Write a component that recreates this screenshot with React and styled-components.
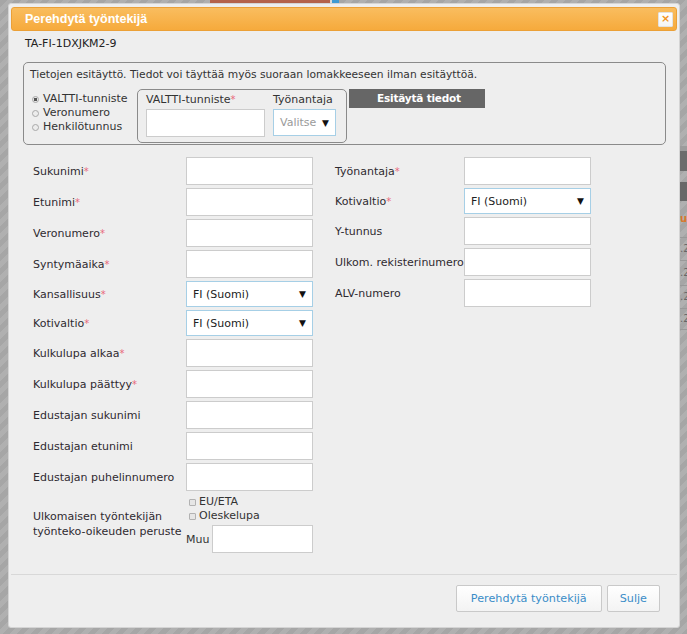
import React from "react";
import styled, { createGlobalStyle } from "styled-components";

const Global = createGlobalStyle`
  html, body { margin: 0; padding: 0; }
  body {
    width: 687px; height: 634px; overflow: hidden;
    font-family: "DejaVu Sans", Verdana, sans-serif;
  }
`;

const Page = styled.div`
  position: relative;
  width: 687px;
  height: 634px;
  overflow: hidden;
  display: flex;
  flex-direction: column;
  background: repeating-linear-gradient(135deg, #a6a6a6 0 5px, #b0b0b0 5px 10px);
`;

const BehindTop = styled.div`
  display: flex;
  height: 3px;
  padding-left: 210px;
`;

const Swatch = styled.div`
  width: ${(p) => p.$w}px;
  height: ${(p) => p.$h || 3}px;
  background: ${(p) => p.$c};
`;

const BehindSideWrap = styled.div`
  display: flex;
  justify-content: flex-end;
  padding-top: 143px;
`;

const BehindSide = styled.div`
  width: 8px;
  display: flex;
  flex-direction: column;
  font-size: 10px;
  line-height: 12px;
  color: #666;
`;

const SideBlock = styled.div`
  height: ${(p) => p.$h}px;
  background: ${(p) => p.$c || "transparent"};
  border-bottom: ${(p) => (p.$line ? "1px solid #999" : "none")};
  color: ${(p) => p.$fg || "#666"};
  font-weight: ${(p) => (p.$bold ? 700 : 400)};
  display: flex;
  align-items: center;
  white-space: nowrap;
  padding-left: 1px;
`;

const Dialog = styled.section`
  position: absolute;
  top: 3px;
  left: 8px;
  width: 672px;
  height: 625px;
  box-sizing: border-box;
  background: #eeeeee;
  border: 1px solid #d4d4d4;
  border-radius: 3px;
  padding: 3px 2px 0;
  display: flex;
  flex-direction: column;
  color: #333;
`;

const Header = styled.header`
  height: 24px;
  box-sizing: border-box;
  border: 1px solid #eba037;
  border-radius: 3px;
  background: linear-gradient(#f9bd5f, #f6aa3c);
  display: flex;
  align-items: center;
  justify-content: space-between;
  padding: 0 3px 0 13px;
`;

const Title = styled.h1`
  margin: 0;
  font-family: "Liberation Sans", Arial, sans-serif;
  font-size: 12.5px;
  font-weight: 700;
  color: #fff;
`;

const CloseButton = styled.button`
  width: 15px;
  height: 15px;
  padding: 0;
  box-sizing: border-box;
  border: 1px solid #e2e2e2;
  border-radius: 1px;
  background: linear-gradient(#ffffff, #f4f4f4);
  color: #f29420;
  font-family: "DejaVu Sans", sans-serif;
  font-weight: 700;
  font-size: 11px;
  line-height: 12px;
  display: flex;
  align-items: center;
  justify-content: center;
`;

const Body = styled.div`
  padding: 0 12px;
  display: flex;
  flex-direction: column;
`;

const IdLine = styled.div`
  padding: 5px 2px 0;
  font-size: 11px;
  line-height: 16px;
  color: #222;
`;

const Prefill = styled.div`
  margin-top: 10px;
  width: 643px;
  height: 83px;
  box-sizing: border-box;
  border: 1px solid #8a8a8a;
  border-radius: 5px;
  padding: 5px 6px 0 6px;
`;

const PrefillText = styled.div`
  font-size: 10.7px;
  line-height: 13px;
  color: #333;
`;

const PrefillRow = styled.div`
  margin-top: 8px;
  display: flex;
  align-items: flex-start;
`;

const RadioGroup = styled.div`
  width: 105px;
  margin-left: 2px;
  padding-top: 3px;
  display: flex;
  flex-direction: column;
`;

const RadioLine = styled.label`
  display: flex;
  align-items: center;
  gap: 4px;
  font-size: 11px;
  line-height: 14px;
  color: #333;
  white-space: nowrap;
`;

const RadioDot = styled.span`
  width: 7px;
  height: 7px;
  box-sizing: border-box;
  border-radius: 50%;
  border: 1px solid #a8a8a8;
  background: ${(p) => (p.$on ? "radial-gradient(circle, #555 0 1.6px, #e8e8e8 2px)" : "#ececec")};
  flex: none;
`;

const InnerBox = styled.div`
  width: 210px;
  height: 54px;
  box-sizing: border-box;
  border: 1px solid #8a8a8a;
  border-radius: 5px;
  padding: 3px 0 0 8px;
  display: flex;
  gap: 8px;
`;

const InnerField = styled.div`
  display: flex;
  flex-direction: column;
  gap: 2px;
`;

const InnerLabel = styled.span`
  font-size: 11px;
  line-height: 14px;
  color: #333;
  white-space: nowrap;
`;

const Req = styled.span`
  color: #e8697c;
  font-size: 10px;
`;

const TextInput = styled.input`
  width: ${(p) => p.$w || 127}px;
  height: 28px;
  box-sizing: border-box;
  border: 1px solid #cccccc;
  background: #fff;
  margin: 0;
  padding: 0 4px;
  font: inherit;
  outline: none;
`;

const SelectBox = styled.div`
  width: ${(p) => p.$w || 127}px;
  height: ${(p) => p.$h || 26}px;
  box-sizing: border-box;
  border: 1px solid #a6cfe6;
  background: #fff;
  display: flex;
  align-items: center;
  justify-content: space-between;
  padding: 0 6px 0 6px;
  font-size: 11px;
  color: ${(p) => (p.$placeholder ? "#9a9a9a" : "#222")};
`;

const Arrow = styled.span`
  font-size: 9px;
  color: #111;
`;

const PrefillButton = styled.button`
  margin-left: 2px;
  width: 136px;
  height: 19px;
  border: none;
  background: #666666;
  color: #fff;
  font-family: "DejaVu Sans", sans-serif;
  font-weight: 700;
  font-size: 10.5px;
  padding: 0 0 1px 4px;
  letter-spacing: -0.2px;
`;

const Columns = styled.div`
  margin-top: 12px;
  padding-left: 10px;
  display: flex;
  gap: 22px;
  align-items: flex-start;
`;

const Column = styled.div`
  display: flex;
  flex-direction: column;
  gap: 3px;
`;

const Row = styled.div`
  display: grid;
  grid-template-columns: ${(p) => p.$labelW}px 127px;
  align-items: center;
`;

const Label = styled.span`
  font-size: 11px;
  line-height: 15px;
  color: #2e2a30;
  white-space: nowrap;
`;

const BasisField = styled.div`
  display: flex;
  flex-direction: column;
  padding-top: 1px;
`;

const CheckLine = styled.label`
  display: flex;
  align-items: center;
  gap: 3px;
  padding-left: 3px;
  font-size: 11px;
  line-height: 14px;
  color: #333;
`;

const CheckBox = styled.span`
  width: 7px;
  height: 7px;
  box-sizing: border-box;
  border: 1px solid #b2b2b2;
  border-radius: 1px;
  background: #e6e6e6;
  flex: none;
`;

const MuuLine = styled.div`
  margin-top: 2px;
  display: flex;
  align-items: center;
  justify-content: space-between;
  font-size: 11px;
  color: #333;
`;

const Footer = styled.footer`
  margin-top: auto;
  border-top: 1px solid #d8d8d8;
  padding: 10px 17px 15px;
  display: flex;
  justify-content: flex-end;
  gap: 5px;
`;

const FooterButton = styled.button`
  height: 27px;
  box-sizing: border-box;
  padding: 0 ${(p) => p.$pad || 12}px;
  border: 1px solid #c9c9c9;
  border-radius: 2px;
  background: linear-gradient(#ffffff, #f3f3f3);
  color: #3a8dc8;
  font-family: "DejaVu Sans", sans-serif;
  font-size: 11.2px;
`;

const leftFields = [
  { label: "Sukunimi", req: true },
  { label: "Etunimi", req: true },
  { label: "Veronumero", req: true },
  { label: "Syntymäaika", req: true },
  { label: "Kansallisuus", req: true, select: "FI (Suomi)" },
  { label: "Kotivaltio", req: true, select: "FI (Suomi)" },
  { label: "Kulkulupa alkaa", req: true },
  { label: "Kulkulupa päättyy", req: true },
  { label: "Edustajan sukunimi" },
  { label: "Edustajan etunimi" },
  { label: "Edustajan puhelinnumero" },
];

const rightFields = [
  { label: "Työnantaja", req: true },
  { label: "Kotivaltio", req: true, select: "FI (Suomi)" },
  { label: "Y-tunnus" },
  { label: "Ulkom. rekisterinumero" },
  { label: "ALV-numero" },
];

function Field({ f, labelW }) {
  return (
    <Row $labelW={labelW}>
      <Label>
        {f.label}
        {f.req && <Req>*</Req>}
      </Label>
      {f.select ? (
        <SelectBox>
          <span>{f.select}</span>
          <Arrow>▼</Arrow>
        </SelectBox>
      ) : (
        <TextInput />
      )}
    </Row>
  );
}

export default function App() {
  return (
    <>
      <Global />
      <Page>
        <BehindTop>
          <Swatch $w={120} $c="#b4624b" />
          <Swatch $w={2} $c="#d9d9d9" />
          <Swatch $w={7} $c="#3e9ad2" />
        </BehindTop>
        <BehindSideWrap>
          <BehindSide>
            <SideBlock $h={5} $c="#9c9c9c" />
            <SideBlock $h={20} $c="#6c6c6c" />
            <SideBlock $h={11} />
            <SideBlock $h={19} $c="#686868" />
            <SideBlock $h={12} />
            <SideBlock $h={12} $fg="#d8772c" $bold>ul</SideBlock>
            <SideBlock $h={12} $line />
            <SideBlock $h={22} $line>.2</SideBlock>
            <SideBlock $h={24} $line>.2</SideBlock>
            <SideBlock $h={22} $line>.2</SideBlock>
            <SideBlock $h={20} $line>.2</SideBlock>
          </BehindSide>
        </BehindSideWrap>

        <Dialog>
          <Header>
            <Title>Perehdytä työntekijä</Title>
            <CloseButton aria-label="Sulje">×</CloseButton>
          </Header>
          <Body>
            <IdLine>TA-FI-1DXJKM2-9</IdLine>
            <Prefill>
              <PrefillText>
                Tietojen esitäyttö. Tiedot voi täyttää myös suoraan lomakkeeseen ilman esitäyttöä.
              </PrefillText>
              <PrefillRow>
                <RadioGroup>
                  <RadioLine>
                    <RadioDot $on />
                    VALTTI-tunniste
                  </RadioLine>
                  <RadioLine>
                    <RadioDot />
                    Veronumero
                  </RadioLine>
                  <RadioLine>
                    <RadioDot />
                    Henkilötunnus
                  </RadioLine>
                </RadioGroup>
                <InnerBox>
                  <InnerField>
                    <InnerLabel>
                      VALTTI-tunniste<Req>*</Req>
                    </InnerLabel>
                    <TextInput $w={119} />
                  </InnerField>
                  <InnerField>
                    <InnerLabel>Työnantaja</InnerLabel>
                    <SelectBox $w={63} $h={27} $placeholder>
                      <span>Valitse</span>
                      <Arrow>▼</Arrow>
                    </SelectBox>
                  </InnerField>
                </InnerBox>
                <PrefillButton>Esitäytä tiedot</PrefillButton>
              </PrefillRow>
            </Prefill>

            <Columns>
              <Column>
                {leftFields.map((f) => (
                  <Field key={f.label} f={f} labelW={153} />
                ))}
                <Row $labelW={153}>
                  <Label>
                    Ulkomaisen työntekijän
                    <br />
                    työnteko-oikeuden peruste
                  </Label>
                  <BasisField>
                    <CheckLine>
                      <CheckBox />
                      EU/ETA
                    </CheckLine>
                    <CheckLine>
                      <CheckBox />
                      Oleskelupa
                    </CheckLine>
                    <MuuLine>
                      <span>Muu</span>
                      <TextInput $w={101} />
                    </MuuLine>
                  </BasisField>
                </Row>
              </Column>
              <Column>
                {rightFields.map((f) => (
                  <Field key={f.label} f={f} labelW={129} />
                ))}
              </Column>
            </Columns>
          </Body>
          <Footer>
            <FooterButton $pad={14}>Perehdytä työntekijä</FooterButton>
            <FooterButton $pad={12}>Sulje</FooterButton>
          </Footer>
        </Dialog>
      </Page>
    </>
  );
}
